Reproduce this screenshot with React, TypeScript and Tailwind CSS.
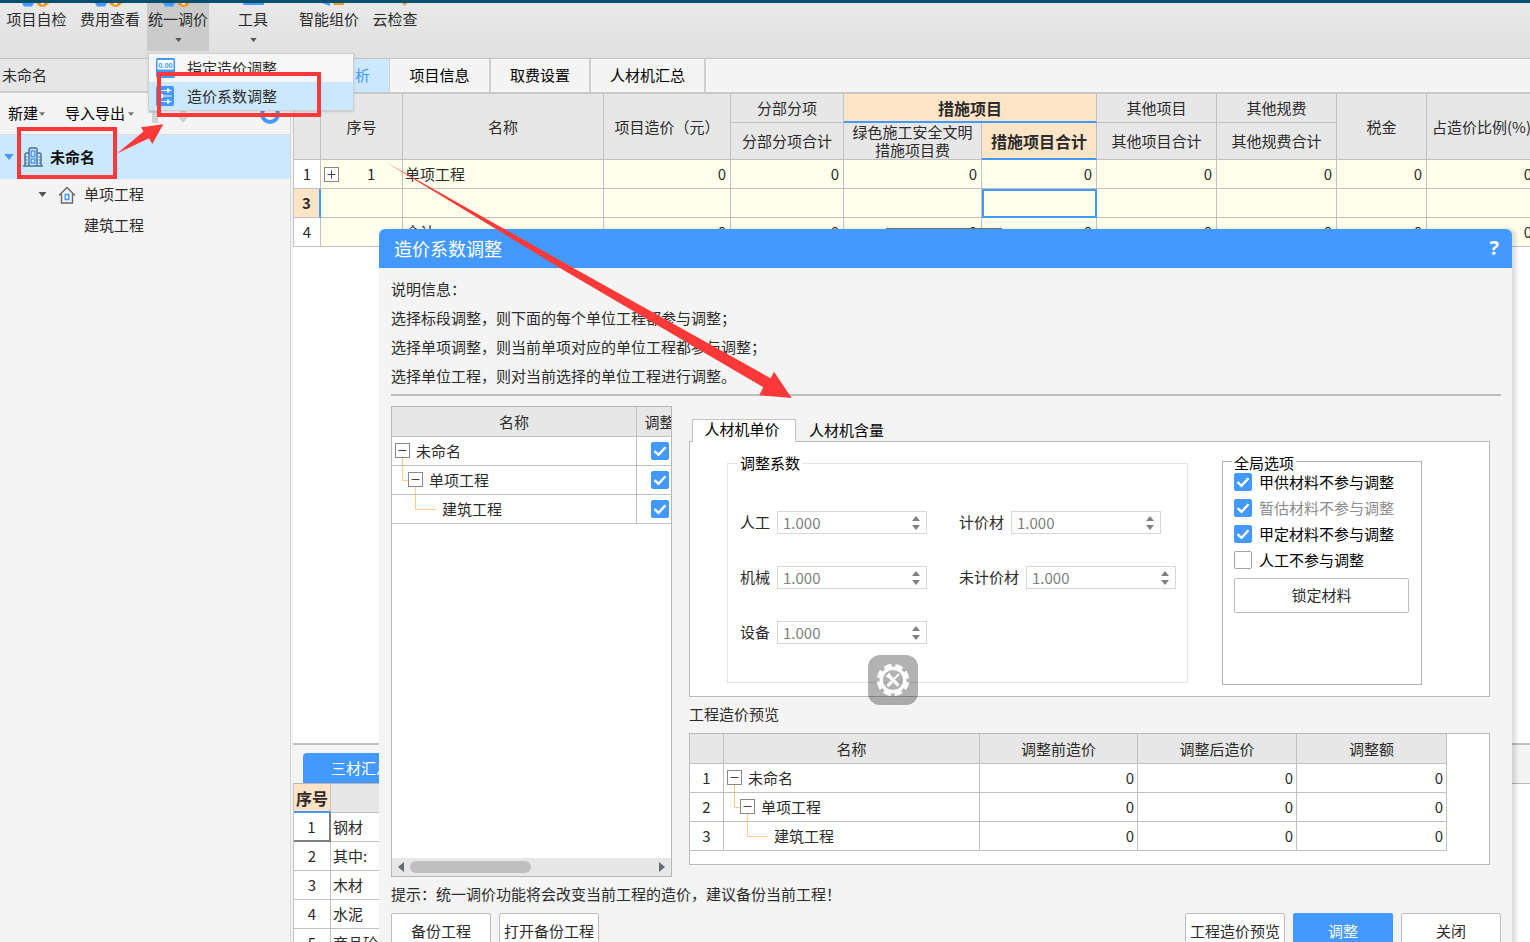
import React from "react";

const UI = "font-['Noto_Sans_CJK_SC',sans-serif]";

function Caret({ className }: { className: string }) {
  return (
    <svg viewBox="0 0 8 5" className={className} aria-hidden="true">
      <path d="M0 0H8L4 5Z" fill="currentColor" />
    </svg>
  );
}

/* ---------- ribbon ---------- */

function RibbonButton({
  label,
  width,
  active,
  caret,
  children,
}: {
  label: string;
  width: string;
  active?: boolean;
  caret?: boolean;
  children: React.ReactNode;
}) {
  return (
    <button
      type="button"
      className={`flex h-12 shrink-0 flex-col items-center whitespace-nowrap ${width} ${active ? "bg-[#cbcbcb]" : ""}`}
    >
      <svg viewBox="0 0 40 4" className="h-1 w-10" aria-hidden="true">
        {children}
      </svg>
      <span className="leading-6">{label}</span>
      {caret && <Caret className="mt-[7px] h-1 w-[7px] text-[#555]" />}
    </button>
  );
}

const personIcon = (
  <>
    <path d="M5 0H17L15 3.500H7Z" fill="#4499ff" />
    <path d="M19 0Q25.500 8 32 0Z" fill="#ff9418" />
    <rect x="24" y="0" width="3" height="1.500" fill="#fff" />
  </>
);

function Ribbon() {
  return (
    <header className="flex h-[59px] shrink-0 border-t-[3px] border-b border-t-[#04516f] border-b-[#c4c4c4] bg-linear-to-b from-[#e9e9e9] to-[#e0e0e0]">
      <RibbonButton label="项目自检" width="w-[73px]">{personIcon}</RibbonButton>
      <RibbonButton label="费用查看" width="w-[74px]">{personIcon}</RibbonButton>
      <RibbonButton label="统一调价" width="w-[62px]" active caret>{personIcon}</RibbonButton>
      <RibbonButton label="工具" width="w-[88px]" caret>
        <path d="M10 0H31V1Q31 2 30 2H11Q10 2 10 1Z" fill="#4499ff" />
      </RibbonButton>
      <RibbonButton label="智能组价" width="w-16">
        <path d="M13 0H21V3Z" fill="#4499ff" />
        <path d="M24 0H35V2H25Z" fill="#ff9418" />
      </RibbonButton>
      <RibbonButton label="云检查" width="w-[68px]">
        <path d="M27 0H32L29.500 3Z" fill="#ff9418" />
      </RibbonButton>
    </header>
  );
}

function DropMenu() {
  return (
    <div className="absolute top-[53px] left-[148px] z-20 w-[206px] border border-[#cfcfcf] bg-[#f6f6f6] shadow-sm">
      <button type="button" className="flex h-7 w-full items-center gap-3 pl-[7px]">
        <svg viewBox="0 0 19 20" className="h-5 w-[19px]" aria-hidden="true">
          <rect width="19" height="20" rx="1.500" fill="#4499ff" />
          <rect x="1.500" y="2" width="16" height="9.500" fill="#fff" />
          <text x="9.500" y="9.500" fontSize="7.500" fontWeight="700" textAnchor="middle" fill="#4499ff" fontFamily="Liberation Sans">0.00</text>
          <path d="M3 14.500H6M8 14.500H11M13 14.500H16M3 17.500H6M8 17.500H11M13 17.500H16" stroke="#fff" strokeWidth="1.200" />
        </svg>
        <span>指定造价调整</span>
      </button>
      <button type="button" className="flex h-7 w-full items-center gap-3 bg-[#cce8ff] pl-[7px]">
        <svg viewBox="0 0 19 20" className="h-5 w-[19px]" aria-hidden="true">
          <rect width="18" height="20" rx="1.500" fill="#4499ff" />
          <path d="M2.500 4.500H15.500M2.500 10H15.500M2.500 15.500H15.500" stroke="#fff" strokeWidth="1.200" />
          <path d="M12 2.500V6.500M6 8V12M12 13.500V17.500" stroke="#fff" strokeWidth="2.200" />
        </svg>
        <span>造价系数调整</span>
      </button>
    </div>
  );
}

/* ---------- project tree ---------- */

function Sidebar() {
  return (
    <aside className="flex w-[291px] shrink-0 flex-col border-r border-[#d4d4d4] bg-[#f4f4f4]">
      <h2 className="h-[34px] border-b-2 border-[#cccccc] bg-[#e6e6e6] pl-[2px] leading-8">未命名</h2>
      <div className="flex h-[42px] items-center border-b border-[#dcdcdc] pl-2 text-black">
        <button type="button" className="flex items-center gap-px">
          新建 <Caret className="h-1 w-[6px] text-[#777]" />
        </button>
        <button type="button" className="ml-5 flex items-center gap-[3px]">
          导入导出 <Caret className="h-1 w-[6px] text-[#777]" />
        </button>
        <button type="button" aria-label="上移" className="ml-[14px]">
          <svg viewBox="0 0 14 18" className="h-[18px] w-[14px]" aria-hidden="true">
            <path d="M7 0L14 8H10V18H4V8H0Z" fill="#d2d2d2" />
          </svg>
        </button>
        <button type="button" aria-label="下移" className="ml-[14px]">
          <svg viewBox="0 0 14 18" className="h-[18px] w-[14px]" aria-hidden="true">
            <path d="M7 18L14 10H10V0H4V10H0Z" fill="#d2d2d2" />
          </svg>
        </button>
        <button type="button" aria-label="保存" className="mr-[10px] ml-auto">
          <svg viewBox="0 0 20 20" className="size-5" aria-hidden="true">
            <circle cx="10" cy="10" r="8" fill="none" stroke="#4499ff" strokeWidth="4" />
            <path d="M7 9V13M10 9V13M13 9V13" stroke="#4499ff" strokeWidth="1.500" />
          </svg>
        </button>
      </div>
      <ul>
        <li className="flex h-11 items-center bg-[#cce8ff] pl-1">
          <Caret className="h-[6px] w-[10px] text-[#4499ff]" />
          <svg viewBox="0 0 20 20" className="ml-[9px] size-5" fill="none" stroke="#47718f" strokeWidth="1.400" aria-hidden="true">
            <path d="M6 19V2.500Q6 1 7.500 1H12.500Q14 1 14 2.500V19M6 6H3.500Q2 6 2 7.500V19M14 6H16.500Q18 6 18 7.500V19M0 19H20" />
            <path d="M2 10H4.500M2 13H4.500M2 16H4.500M15.500 10H18M15.500 13H18M15.500 16H18" strokeWidth="1" />
            <path d="M8.200 4H11.800V9.500H8.200ZM8.200 12H11.800V16H8.200Z" stroke="#4499ff" />
          </svg>
          <span className="ml-[7px] font-bold text-[#111]">未命名</span>
        </li>
        <li className="flex h-[31px] items-center pl-[38px]">
          <Caret className="h-[5px] w-[9px] text-[#555]" />
          <svg viewBox="0 0 18 18" className="ml-[11px] size-[18px]" fill="none" stroke="#666" strokeWidth="1.400" aria-hidden="true">
            <path d="M1 9.500L9 1.500L17 9.500M3.500 8V17H14.500V8" />
            <path d="M7.200 8.500H10.800V13.500H7.200Z" stroke="#4499ff" />
          </svg>
          <span className="ml-2">单项工程</span>
        </li>
        <li className="flex h-[31px] items-center pl-[84px]">建筑工程</li>
      </ul>
    </aside>
  );
}

/* ---------- main grid ---------- */

const line = "border-[#c1c1c1]";
const head = `border-r border-b ${line} bg-[#e7e7e7] p-0 text-center font-normal`;
const num = `border-r border-b ${line} bg-[#ffffec] p-0 pr-1 text-right`;

function Zeros({ count }: { count: number }) {
  return (
    <>
      {Array.from({ length: count }, (_, i) => (
        <td key={i} className={num}>0</td>
      ))}
    </>
  );
}

function MainGrid() {
  return (
    <table className={`w-[1243px] table-fixed border-separate border-spacing-0 border-l ${line} leading-[18px] whitespace-nowrap`}>
      <colgroup>
        <col className="w-[27px]" />
        <col className="w-[82px]" />
        <col className="w-[201px]" />
        <col className="w-[127px]" />
        <col className="w-[113px]" />
        <col className="w-[138px]" />
        <col className="w-[115px]" />
        <col className="w-[120px]" />
        <col className="w-[120px]" />
        <col className="w-[90px]" />
        <col className="w-[110px]" />
      </colgroup>
      <thead>
        <tr className="h-[29px]">
          <th rowSpan={2} className={head} />
          <th rowSpan={2} className={head}>序号</th>
          <th rowSpan={2} className={head}>名称</th>
          <th rowSpan={2} className={head}>项目造价（元）</th>
          <th className={head}>分部分项</th>
          <th colSpan={2} className="border-r border-b-2 border-r-[#c1c1c1] border-b-[#4499ff] bg-[#ffe5c8] p-0 text-base leading-[18px] font-bold">
            措施项目
          </th>
          <th className={head}>其他项目</th>
          <th className={head}>其他规费</th>
          <th rowSpan={2} className={head}>税金</th>
          <th rowSpan={2} className={head}>占造价比例(%)</th>
        </tr>
        <tr className="h-[37px]">
          <th className={head}>分部分项合计</th>
          <th className={head}>
            绿色施工安全文明
            <br />
            措施项目费
          </th>
          <th className="border-r border-b-2 border-r-[#c1c1c1] border-b-[#4499ff] bg-[#ffe5c8] p-0 text-base leading-[18px] font-bold">
            措施项目合计
          </th>
          <th className={head}>其他项目合计</th>
          <th className={head}>其他规费合计</th>
        </tr>
      </thead>
      <tbody>
        <tr className="h-[29px]">
          <td className={`border-r border-b ${line} bg-white p-0 text-center`}>1</td>
          <td className={`border-r border-b ${line} bg-[#ffffec] p-0`}>
            <div className="flex items-center pl-[3px]">
              <button type="button" aria-label="展开">
                <svg viewBox="0 0 15 15" className="size-[15px]" fill="none" stroke="#444" aria-hidden="true">
                  <rect x=".5" y=".5" width="14" height="14" fill="#fff" stroke="#888" />
                  <path d="M3.500 7.500H11.500M7.500 3.500V11.500" />
                </svg>
              </button>
              <span className="ml-7">1</span>
            </div>
          </td>
          <td className={`border-r border-b ${line} bg-[#ffffec] p-0 pl-[2px]`}>单项工程</td>
          <Zeros count={8} />
        </tr>
        <tr className="h-[29px]">
          <td className="border-r-2 border-b border-r-[#4499ff] border-b-[#c1c1c1] bg-[#ffe3c6] p-0 text-center font-bold">3</td>
          <td className={num} />
          <td className={num} />
          <td className={num} />
          <td className={num} />
          <td className={num} />
          <td className="border-2 border-[#4499ff] bg-[#ffffec] p-0" />
          <td className={num} />
          <td className={num} />
          <td className={num} />
          <td className={num} />
        </tr>
        <tr className="h-[29px]">
          <td className={`border-r border-b ${line} bg-white p-0 text-center`}>4</td>
          <td className={num} />
          <td className={`border-r border-b ${line} bg-[#ffffec] p-0 pl-[2px]`}>合计</td>
          <Zeros count={8} />
        </tr>
      </tbody>
    </table>
  );
}

function Workspace() {
  const tab = "shrink-0 border-r-2 border-[#d0d0d0] text-black";
  const materials = ["钢材", "其中:", "木材", "水泥", "商品砼"];
  return (
    <main className="ml-[2px] flex min-w-0 flex-1 flex-col overflow-hidden bg-white">
      <nav className="flex h-[35px] shrink-0 border-b-2 border-[#c8c8c8] bg-[#f4f4f4]">
        <button type="button" className="w-[97px] shrink-0 border-r border-[#d0d0d0] bg-[#cce8ff] pr-[2px] text-[#4499ff]">造价分析</button>
        <button type="button" className={`w-[101px] ${tab}`}>项目信息</button>
        <button type="button" className={`w-[100px] ${tab}`}>取费设置</button>
        <button type="button" className={`w-[115px] ${tab}`}>人材机汇总</button>
      </nav>
      <div className="min-h-0 flex-1 overflow-hidden">
        <MainGrid />
      </div>
      <section className="flex h-[199px] shrink-0 flex-col overflow-hidden border-t-2 border-[#c0c0c0]">
        <div className="flex h-[39px] shrink-0 items-end border-b border-[#b8b8b8] bg-[#f4f4f4] pl-[10px]">
          <button type="button" className="h-[30px] w-[116px] rounded-t-sm bg-[#4499ff] text-white">三材汇总</button>
        </div>
        <table className={`w-[400px] table-fixed border-separate border-spacing-0 border-l ${line} leading-[18px]`}>
          <colgroup>
            <col className="w-[37px]" />
            <col />
          </colgroup>
          <thead>
            <tr className="h-[29px]">
              <th className="border-r border-b-2 border-r-[#c1c1c1] border-b-[#4499ff] bg-[#ffe3c6] p-0 text-base leading-[18px] font-bold whitespace-nowrap">序号</th>
              <th className={head} />
            </tr>
          </thead>
          <tbody>
            {materials.map((name, i) => (
              <tr key={name} className="h-[29px]">
                <td className={`p-0 text-center ${i === 0 ? "border-r-2 border-b-2 border-[#808080]" : "border-r border-b border-[#c1c1c1]"}`}>{i + 1}</td>
                <td className={`border-r border-b ${line} p-0 pl-[2px]`}>{name}</td>
              </tr>
            ))}
          </tbody>
        </table>
      </section>
    </main>
  );
}

/* ---------- dialog ---------- */

function TreeNode({ level, label }: { level: 0 | 1 | 2; label: string }) {
  const width = ["w-[15px]", "w-[28px]", "w-[41px]"][level];
  const box = level * 13;
  const size = [15, 28, 41][level];
  return (
    <div className="flex h-7 items-center gap-[6px] pl-[3px]">
      <svg viewBox={`0 0 ${size} 28`} className={`h-7 shrink-0 ${width}`} fill="none" aria-hidden="true">
        {level > 0 && <path d={`M${box - 5.5} 0V14.500H${level === 2 ? 41 : box}`} stroke="#ffcb8a" />}
        {level < 2 && (
          <>
            <path d={`M${box + 7.5} 21V28`} stroke="#ffcb8a" />
            <rect x={box + 0.5} y="6.500" width="14" height="14" fill="#fff" stroke="#888" />
            <path d={`M${box + 3.5} 13.500H${box + 11.5}`} stroke="#444" />
          </>
        )}
      </svg>
      <span>{label}</span>
    </div>
  );
}

const nodes: { level: 0 | 1 | 2; label: string }[] = [
  { level: 0, label: "未命名" },
  { level: 1, label: "单项工程" },
  { level: 2, label: "建筑工程" },
];

function Check({ id, checked, label }: { id: string; checked: boolean; label?: string }) {
  return (
    <span className="relative inline-flex size-[18px] shrink-0 align-middle">
      <input
        id={id}
        type="checkbox"
        defaultChecked={checked}
        aria-label={label}
        className="peer size-[18px] appearance-none rounded-xs border border-[#a0a0a0] bg-white checked:border-[#4499ff] checked:bg-[#4499ff]"
      />
      <svg viewBox="0 0 18 18" className="pointer-events-none absolute inset-0 hidden size-[18px] peer-checked:block" fill="none" stroke="#fff" strokeWidth="2.400" aria-hidden="true">
        <path d="M3.500 9.200L7.500 12.800L14.500 5.200" />
      </svg>
    </span>
  );
}

function ScopeTree() {
  return (
    <div className="flex h-[471px] w-[281px] shrink-0 flex-col overflow-hidden border border-[#b8b8b8] bg-white">
      <div className="flex-1 overflow-hidden">
        <table className="w-[291px] table-fixed border-separate border-spacing-0 leading-[18px]">
          <colgroup>
            <col className="w-[245px]" />
            <col className="w-[46px]" />
          </colgroup>
          <thead>
            <tr className="h-[30px]">
              <th className={head}>名称</th>
              <th className={head}>调整</th>
            </tr>
          </thead>
          <tbody>
            {nodes.map((n, i) => (
              <tr key={n.label} className="h-[29px]">
                <td className={`border-r border-b ${line} p-0`}>
                  <TreeNode {...n} />
                </td>
                <td className={`border-r border-b ${line} p-0 text-center leading-none`}>
                  <Check id={`scope-${i}`} checked label={`调整${n.label}`} />
                </td>
              </tr>
            ))}
          </tbody>
        </table>
      </div>
      <div className="flex h-[18px] shrink-0 items-center justify-between bg-[#e7e7e7] px-[6px]">
        <svg viewBox="0 0 6 10" className="h-[10px] w-[6px]" aria-hidden="true">
          <path d="M6 0V10L0 5Z" fill="#666b75" />
        </svg>
        <div className="mr-auto ml-[6px] h-3 w-[121px] rounded-full bg-[#bfbfbf]" />
        <svg viewBox="0 0 6 10" className="h-[10px] w-[6px]" aria-hidden="true">
          <path d="M0 0V10L6 5Z" fill="#666b75" />
        </svg>
      </div>
    </div>
  );
}

function Spin({ id, label }: { id: string; label: string }) {
  return (
    <div className="flex items-center gap-[7px]">
      <label htmlFor={id} className="whitespace-nowrap">{label}</label>
      <div className="flex h-[23px] w-[150px] items-center border border-[#d8d8d8] bg-white pr-[6px]">
        <input id={id} defaultValue="1.000" className="h-[21px] w-full min-w-0 flex-1 bg-transparent pl-[5px] text-[15px] leading-5 text-[#808080] outline-none" />
        <div className="flex flex-col gap-1">
          <button type="button" aria-label={`增大${label}`}>
            <Caret className="h-[5px] w-2 rotate-180 text-[#808080]" />
          </button>
          <button type="button" aria-label={`减小${label}`}>
            <Caret className="h-[5px] w-2 text-[#808080]" />
          </button>
        </div>
      </div>
    </div>
  );
}

const options = [
  { label: "甲供材料不参与调整", checked: true },
  { label: "暂估材料不参与调整", checked: true, muted: true },
  { label: "甲定材料不参与调整", checked: true },
  { label: "人工不参与调整", checked: false },
];

function FloatingGear() {
  return (
    <button type="button" aria-label="工具箱" className="absolute top-[213px] left-[178px] flex size-[50px] items-center justify-center rounded-xl bg-black/30">
      <svg viewBox="0 0 34 34" className="size-[34px]" fill="none" stroke="#fff" aria-hidden="true">
        <circle cx="17" cy="17" r="11.800" strokeWidth="3.400" />
        <circle cx="17" cy="17" r="14.400" strokeWidth="3.800" strokeDasharray="7.400 3.910" strokeDashoffset="-1.950" />
        <path d="M13 13L21.500 21.500" strokeWidth="3.200" strokeLinecap="round" />
        <path d="M22.500 11.500L18.500 15.500" strokeWidth="2" strokeLinecap="round" />
        <path d="M15 19.500L12.500 22" strokeWidth="3.200" strokeLinecap="round" />
        <path d="M10.500 14L14 10.500" strokeWidth="2.200" />
      </svg>
    </button>
  );
}

function Factors() {
  return (
    <div className="relative flex h-64 border border-[#b8b8b8] bg-white pt-[11px] pr-[67px] pl-[37px]">
      <fieldset className="h-[230px] min-w-0 flex-1 border border-[#e4e4e4] pl-3">
        <legend className="-ml-[2px] px-[2px] leading-5 text-black">调整系数</legend>
        <div className="flex gap-8 pt-[38px]">
          <div className="flex flex-col gap-8">
            <Spin id="f-labor" label="人工" />
            <Spin id="f-machine" label="机械" />
            <Spin id="f-equip" label="设备" />
          </div>
          <div className="flex flex-col gap-8">
            <Spin id="f-priced" label="计价材" />
            <Spin id="f-unpriced" label="未计价材" />
          </div>
        </div>
      </fieldset>
      <fieldset className="ml-[34px] h-[232px] w-[200px] shrink-0 border border-[#b0b0b0] pl-[9px]">
        <legend className="px-[2px] pt-1 leading-3 text-black">全局选项</legend>
        <div className="pl-[2px]">
          {options.map((o, i) => (
            <div key={o.label} className="flex h-[26px] items-center gap-[7px]">
              <Check id={`opt-${i}`} checked={o.checked} />
              <label htmlFor={`opt-${i}`} className={`whitespace-nowrap ${o.muted ? "text-[#8c8c8c]" : "text-black"}`}>{o.label}</label>
            </div>
          ))}
          <button type="button" className="mt-[5px] h-[35px] w-[175px] rounded-xs border border-[#bcbcbc] bg-white">锁定材料</button>
        </div>
      </fieldset>
      <FloatingGear />
    </div>
  );
}

function Preview() {
  const cell = `border-r border-b ${line} p-0 pr-[3px] text-right`;
  return (
    <div className="h-[132px] overflow-hidden border border-[#b8b8b8] bg-white">
      <table className="w-[757px] table-fixed border-separate border-spacing-0 leading-[18px]">
        <colgroup>
          <col className="w-[34px]" />
          <col className="w-[256px]" />
          <col className="w-[158px]" />
          <col className="w-[159px]" />
          <col className="w-[150px]" />
        </colgroup>
        <thead>
          <tr className="h-[30px]">
            <th className={head} />
            <th className={head}>名称</th>
            <th className={head}>调整前造价</th>
            <th className={head}>调整后造价</th>
            <th className={head}>调整额</th>
          </tr>
        </thead>
        <tbody>
          {nodes.map((n, i) => (
            <tr key={n.label} className="h-[29px]">
              <td className={`border-r border-b ${line} p-0 text-center`}>{i + 1}</td>
              <td className={`border-r border-b ${line} p-0`}>
                <TreeNode {...n} />
              </td>
              <td className={cell}>0</td>
              <td className={cell}>0</td>
              <td className={cell}>0</td>
            </tr>
          ))}
        </tbody>
      </table>
    </div>
  );
}

function AdjustDialog() {
  const btn = "h-9 w-[100px] rounded-xs border border-[#bcbcbc] bg-white whitespace-nowrap";
  return (
    <div role="dialog" aria-label="造价系数调整" className="absolute top-[229px] right-[18px] left-[379px] z-10 rounded-t-md bg-[#f4f4f4] shadow-[4px_0_4px_rgba(0,0,0,0.14)]">
      <div className="absolute -top-px left-[507px] h-px w-[116px] bg-[#707070]" />
      <div className="flex h-[39px] items-center justify-between rounded-t-md bg-[#4499ff] pr-[13px] pb-[2px] pl-[15px] text-lg text-white">
        <h1>造价系数调整</h1>
        <button type="button" aria-label="帮助" className="font-['Noto_Sans',sans-serif] text-xl font-bold">?</button>
      </div>
      <div className="pt-[6px] pr-[11px] pb-4 pl-3">
        <div className="border-b-2 border-[#bdbdbd] pb-1 leading-[29px]">
          <p>说明信息：</p>
          <p>选择标段调整，则下面的每个单位工程都参与调整；</p>
          <p>选择单项调整，则当前单项对应的单位工程都参与调整；</p>
          <p>选择单位工程，则对当前选择的单位工程进行调整。</p>
        </div>
        <div className="flex gap-[17px] pt-[10px] pr-[11px]">
          <ScopeTree />
          <div className="min-w-0 flex-1 pt-[13px]">
            <div role="tablist" className="flex h-[22px] pl-[3px] text-black">
              <button type="button" role="tab" aria-selected="true" className="relative z-10 -mb-px h-[23px] w-[104px] border border-b-0 border-[#c4c4c4] bg-white pr-1 pb-1 leading-[18px]">
                人材机单价
              </button>
              <button type="button" role="tab" aria-selected="false" className="px-[13px] leading-[22px]">人材机含量</button>
            </div>
            <Factors />
            <h3 className="h-9 leading-[34px]">工程造价预览</h3>
            <Preview />
          </div>
        </div>
        <p className="h-9 leading-[34px]">提示：统一调价功能将会改变当前工程的造价，建议备份当前工程！</p>
        <div className="flex gap-2">
          <button type="button" className={btn}>备份工程</button>
          <button type="button" className={`mr-auto ${btn}`}>打开备份工程</button>
          <button type="button" className={btn}>工程造价预览</button>
          <button type="button" className="h-9 w-[100px] rounded-xs bg-[#4499ff] text-white">调整</button>
          <button type="button" className={btn}>关闭</button>
        </div>
      </div>
    </div>
  );
}

function Annotations() {
  return (
    <div className="pointer-events-none absolute inset-0 z-30 overflow-hidden">
      <svg width="800" height="410" viewBox="0 0 800 410" aria-hidden="true">
        <g fill="none" stroke="#fc3939" strokeWidth="4">
          <rect x="159" y="74" width="160" height="41" />
          <rect x="19" y="129" width="96" height="48" />
        </g>
        <g fill="#fc3939">
          <path d="M117 153.500L143.500 131.500L141 127.300L163.300 124.300L152.300 144L149 138.200Z" />
          <path d="M385.500 162L577 270L770.700 378.300L774 371.700L791.700 398L759.300 395.300L763.300 387.300L563.300 270Z" />
        </g>
      </svg>
    </div>
  );
}

export default function App() {
  return (
    <div className={`relative flex h-screen flex-col overflow-hidden bg-[#f4f4f4] text-[15px] text-[#2b2b2b] ${UI}`}>
      <Ribbon />
      <div className="flex min-h-0 flex-1">
        <Sidebar />
        <Workspace />
      </div>
      <AdjustDialog />
      <DropMenu />
      <Annotations />
    </div>
  );
}
